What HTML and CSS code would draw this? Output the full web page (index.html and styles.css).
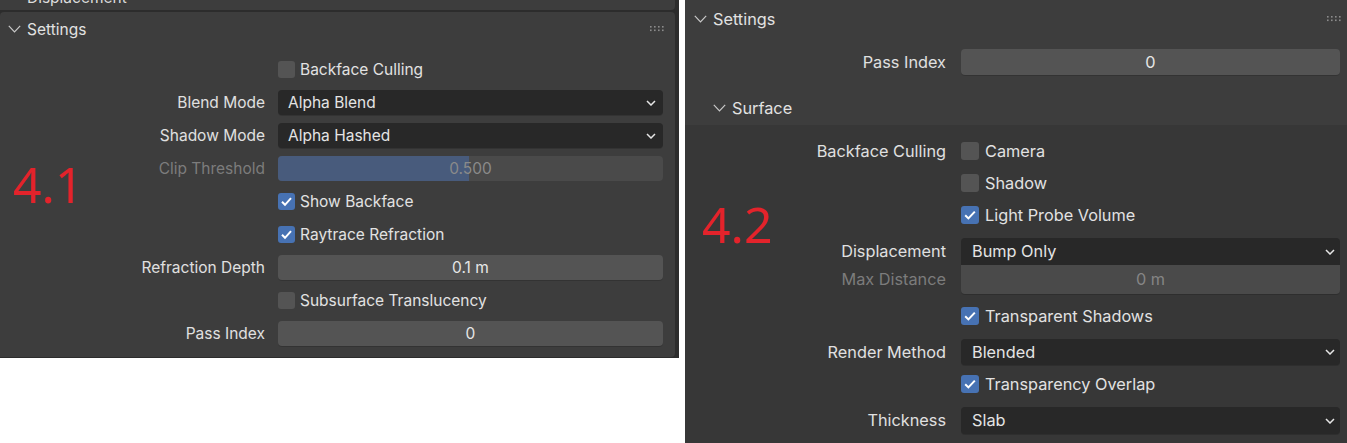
FILE: index.html
```html
<!DOCTYPE html>
<html>
<head>
<meta charset="utf-8">
<link rel="stylesheet" href="styles.css">
</head>
<body>
<div class="page">
  <div class="shot shot41">
    <div class="stub"><span class="stub-title">Displacement</span></div>
    <div class="panel panel41">
      <div class="phead">
        <svg class="chev" width="13" height="8" viewBox="0 0 13 8"><polyline points="0.8,0.8 6.5,6.8 12.2,0.8" fill="none" stroke="#c9c9c9" stroke-width="1.2"/></svg>
        <span class="ptitle">Settings</span>
        <svg class="grip" width="15" height="6" viewBox="0 0 15 6"><g fill="#8c8c8c"><rect x="0" y="0" width="1.6" height="1.6"/><rect x="4" y="0" width="1.6" height="1.6"/><rect x="8" y="0" width="1.6" height="1.6"/><rect x="12" y="0" width="1.6" height="1.6"/><rect x="0" y="3.5" width="1.6" height="1.6"/><rect x="4" y="3.5" width="1.6" height="1.6"/><rect x="8" y="3.5" width="1.6" height="1.6"/><rect x="12" y="3.5" width="1.6" height="1.6"/></g></svg>
      </div>
      <div class="pbody41">
        <div class="row41"><span class="lbl"></span><div class="check"><span class="box"></span><span class="ctext">Backface Culling</span></div></div>
        <div class="row41"><span class="lbl">Blend Mode</span><div class="drop"><span>Alpha Blend</span><svg class="dchev" width="10" height="6" viewBox="0 0 10 6"><polyline points="1,1 5,5 9,1" fill="none" stroke="#e6e6e6" stroke-width="1.5"/></svg></div></div>
        <div class="row41"><span class="lbl">Shadow Mode</span><div class="drop"><span>Alpha Hashed</span><svg class="dchev" width="10" height="6" viewBox="0 0 10 6"><polyline points="1,1 5,5 9,1" fill="none" stroke="#e6e6e6" stroke-width="1.5"/></svg></div></div>
        <div class="row41 dim"><span class="lbl">Clip Threshold</span><div class="slider"><span class="fill" style="width:49.6%"></span><span class="sval">0.500</span></div></div>
        <div class="row41"><span class="lbl"></span><div class="check"><span class="box on"><svg width="17" height="17" viewBox="0 0 17 17"><polyline points="4,8.8 7,11.8 13,5.2" fill="none" stroke="#fff" stroke-width="2"/></svg></span><span class="ctext">Show Backface</span></div></div>
        <div class="row41"><span class="lbl"></span><div class="check"><span class="box on"><svg width="17" height="17" viewBox="0 0 17 17"><polyline points="4,8.8 7,11.8 13,5.2" fill="none" stroke="#fff" stroke-width="2"/></svg></span><span class="ctext">Raytrace Refraction</span></div></div>
        <div class="row41"><span class="lbl">Refraction Depth</span><div class="num">0.1 m</div></div>
        <div class="row41"><span class="lbl"></span><div class="check"><span class="box"></span><span class="ctext">Subsurface Translucency</span></div></div>
        <div class="row41"><span class="lbl">Pass Index</span><div class="num">0</div></div>
      </div>
      <div class="ver ver41">4.1</div>
    </div>
  </div>

  <div class="shot shot42">
    <div class="phead phead42">
      <svg class="chev" width="13" height="8" viewBox="0 0 13 8"><polyline points="0.8,0.8 6.5,6.8 12.2,0.8" fill="none" stroke="#c9c9c9" stroke-width="1.2"/></svg>
      <span class="ptitle">Settings</span>
      <svg class="grip" width="15" height="6" viewBox="0 0 15 6"><g fill="#8c8c8c"><rect x="0" y="0" width="1.6" height="1.6"/><rect x="4" y="0" width="1.6" height="1.6"/><rect x="8" y="0" width="1.6" height="1.6"/><rect x="12" y="0" width="1.6" height="1.6"/><rect x="0" y="3.5" width="1.6" height="1.6"/><rect x="4" y="3.5" width="1.6" height="1.6"/><rect x="8" y="3.5" width="1.6" height="1.6"/><rect x="12" y="3.5" width="1.6" height="1.6"/></g></svg>
    </div>
    <div class="pbody42top">
      <div class="row42"><span class="lbl">Pass Index</span><div class="num">0</div></div>
    </div>
    <div class="subhead">
      <svg class="chev" width="13" height="8" viewBox="0 0 13 8"><polyline points="0.8,0.8 6.5,6.8 12.2,0.8" fill="none" stroke="#c9c9c9" stroke-width="1.2"/></svg>
      <span class="ptitle">Surface</span>
    </div>
    <div class="subbody">
      <div class="row42"><span class="lbl">Backface Culling</span><div class="check"><span class="box"></span><span class="ctext">Camera</span></div></div>
      <div class="row42 g6"><span class="lbl"></span><div class="check"><span class="box"></span><span class="ctext">Shadow</span></div></div>
      <div class="row42 g6"><span class="lbl"></span><div class="check"><span class="box on"><svg width="18" height="18" viewBox="0 0 18 18"><polyline points="4.2,9.2 7.4,12.4 13.8,5.6" fill="none" stroke="#fff" stroke-width="2"/></svg></span><span class="ctext">Light Probe Volume</span></div></div>
      <div class="col-group g10">
        <div class="row42 tall"><span class="lbl">Displacement</span><div class="drop top"><span>Bump Only</span><svg class="dchev" width="10" height="6" viewBox="0 0 10 6"><polyline points="1,1 5,5 9,1" fill="none" stroke="#e6e6e6" stroke-width="1.5"/></svg></div></div>
        <div class="row42 taller dim"><span class="lbl">Max Distance</span><div class="num bottom">0 m</div></div>
      </div>
      <div class="row42 g10"><span class="lbl"></span><div class="check"><span class="box on"><svg width="18" height="18" viewBox="0 0 18 18"><polyline points="4.2,9.2 7.4,12.4 13.8,5.6" fill="none" stroke="#fff" stroke-width="2"/></svg></span><span class="ctext">Transparent Shadows</span></div></div>
      <div class="row42 g10"><span class="lbl">Render Method</span><div class="drop"><span>Blended</span><svg class="dchev" width="10" height="6" viewBox="0 0 10 6"><polyline points="1,1 5,5 9,1" fill="none" stroke="#e6e6e6" stroke-width="1.5"/></svg></div></div>
      <div class="row42 g6"><span class="lbl"></span><div class="check"><span class="box on"><svg width="18" height="18" viewBox="0 0 18 18"><polyline points="4.2,9.2 7.4,12.4 13.8,5.6" fill="none" stroke="#fff" stroke-width="2"/></svg></span><span class="ctext">Transparency Overlap</span></div></div>
      <div class="row42 g10 tall"><span class="lbl">Thickness</span><div class="drop"><span>Slab</span><svg class="dchev" width="10" height="6" viewBox="0 0 10 6"><polyline points="1,1 5,5 9,1" fill="none" stroke="#e6e6e6" stroke-width="1.5"/></svg></div></div>
    </div>
    <div class="ver ver42">4.2</div>
  </div>
</div>
</body>
</html>
```

FILE: styles.css
```css
* { box-sizing: border-box; }
html, body { margin: 0; padding: 0; background: #ffffff; }
body {
  font-family: Inter, "Noto Sans", sans-serif;
  color: #e0e0e0;
  overflow: hidden;
}
.page {
  display: flex;
  align-items: flex-start;
  gap: 6px;
  width: 1347px;
  height: 443px;
}

/* ---------- 4.1 shot ---------- */
.shot {
  position: relative;
  flex: none;
}
.shot41 {
  width: 679px;
  height: 358px;
  background: #2c2c2c;
  display: flex;
  flex-direction: column;
}
.stub {
  width: 675px;
  height: 10px;
  background: #3d3d3d;
  border-radius: 0 0 4px 0;
  overflow: hidden;
  padding-left: 27px;
}
.stub-title {
  display: block;
  font-size: 15.5px;
  line-height: 20px;
  margin-top: -12px;
  color: #dcdcdc;
}
.panel {
  position: relative;
}
.panel41 {
  margin-top: 2px;
  width: 675px;
  height: 345px;
  background: #3d3d3d;
  border-radius: 4px 4px 4px 0;
}
.phead {
  display: flex;
  align-items: center;
  height: 34px;
  padding-left: 8px;
  padding-right: 10px;
  font-size: 15.5px;
}
.chev { flex: none; margin-right: 6px; }
.ptitle { flex: 1; color: #e2e2e2; }
.grip { flex: none; }

.pbody41 {
  display: flex;
  flex-direction: column;
  gap: 8px;
  padding: 11px 12px 11px 0;
  font-size: 15.5px;
}
.row41 {
  display: grid;
  grid-template-columns: 265px 1fr;
  column-gap: 13px;
  height: 25px;
  line-height: 25px;
}
.lbl {
  text-align: right;
  color: #e0e0e0;
  white-space: nowrap;
}
.dim .lbl { color: #7c7c7c; }

.check {
  display: flex;
  align-items: center;
  gap: 5px;
}
.box {
  flex: none;
  width: 17px;
  height: 17px;
  border-radius: 3px;
  background: #545454;
  display: flex;
}
.box.on { background: #4772b3; }
.ctext { color: #e2e2e2; white-space: nowrap; }

.drop {
  display: flex;
  align-items: center;
  justify-content: space-between;
  background: #282828;
  border-radius: 4px;
  padding: 0 7px 0 10px;
  color: #e4e4e4;
  box-shadow: 0 1px 0 rgba(0,0,0,0.15);
}
.dchev { flex: none; }

.num {
  background: #545454;
  border-radius: 4px;
  text-align: center;
  color: #e6e6e6;
  box-shadow: 0 1px 0 rgba(0,0,0,0.15);
}
.dim .num { background: #4a4a4a; color: #858585; }

.slider {
  position: relative;
  background: #4a4a4a;
  border-radius: 4px;
  overflow: hidden;
  text-align: center;
}
.fill {
  position: absolute;
  left: 0; top: 0; bottom: 0;
  background: #485b7c;
}
.sval {
  position: relative;
  color: #8a8a8a;
}

.ver {
  position: absolute;
  font-family: "Noto Sans", sans-serif;
  font-size: 50px;
  line-height: 50px;
  color: #e3232b;
}
.ver41 { left: 13px; top: 147px; }

/* ---------- 4.2 shot ---------- */
.shot42 {
  width: 662px;
  height: 443px;
  background: #3d3d3d;
  display: flex;
  flex-direction: column;
}
.phead42 {
  height: 38px;
  padding-left: 9px;
  padding-right: 5px;
  font-size: 16.3px;
}
.pbody42top {
  padding: 11px 7px 16px 0;
}
.row42 {
  display: grid;
  grid-template-columns: 261px 1fr;
  column-gap: 15px;
  height: 26px;
  line-height: 26px;
  font-size: 16.3px;
}
.row42 .box { width: 18px; height: 18px; }
.row42 .check { gap: 6px; }
.row42 .drop { padding: 0 5px 0 11px; }
.row42.tall { height: 27px; line-height: 27px; }
.row42.taller { height: 28px; line-height: 29px; }
.subhead {
  display: flex;
  align-items: center;
  height: 34px;
  padding-left: 28px;
  font-size: 16.3px;
}
.subbody {
  flex: 1;
  background: #373737;
  padding: 13px 7px 0 0;
  display: flex;
  flex-direction: column;
}
.g6 { margin-top: 6px; }
.g10 { margin-top: 10px; }
.col-group { display: flex; flex-direction: column; }
.drop.top { border-radius: 4px 4px 0 0; box-shadow: none; }
.num.bottom { border-radius: 0 0 4px 4px; }
.ver42 { left: 17px; top: 199px; }
```
